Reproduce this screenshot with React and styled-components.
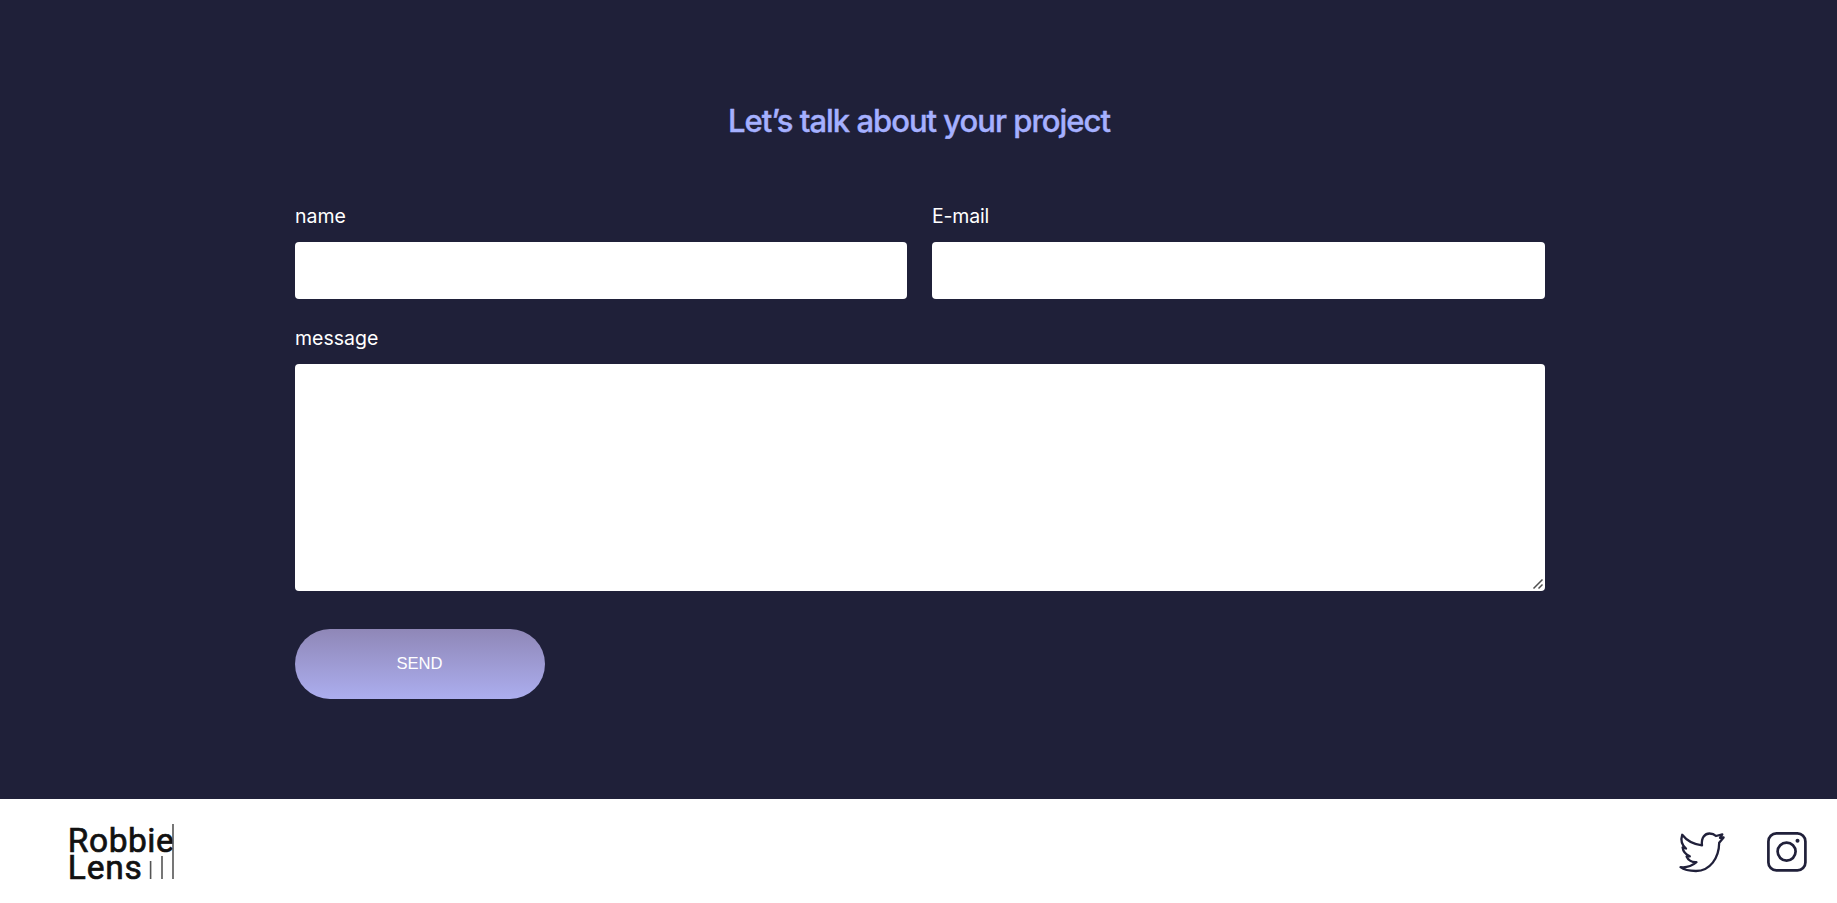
import React from "react";
import styled, { createGlobalStyle } from "styled-components";

const Global = createGlobalStyle`
  *, *::before, *::after { box-sizing: border-box; }
  body { margin: 0; background: #fff; font-family: Inter, "Open Sans", sans-serif; }
`;

const Contact = styled.section`
  height: 799px;
  padding-top: 100px;
  background: #1f2039;
`;

const Form = styled.form`
  width: 1250px;
  margin: 0 0 0 295px;
  display: flex;
  flex-direction: column;
`;

const Title = styled.h2`
  margin: 0 0 56px;
  padding-right: 2px;
  height: 42px;
  line-height: 41px;
  font-size: 31px;
  font-weight: 500;
  letter-spacing: -1px;
  text-align: center;
  color: #a5b0ff;
  -webkit-text-stroke: 0.4px #a5b0ff;
`;

const FieldRow = styled.div`
  display: grid;
  grid-template-columns: 612px 1fr;
  gap: 25px;
  margin-bottom: 21px;
`;

const Field = styled.label`
  display: flex;
  flex-direction: column;
`;

const LabelText = styled.span`
  height: 36px;
  margin-bottom: 8px;
  line-height: 36px;
  font-size: 19.5px;
  font-weight: 400;
  letter-spacing: ${(p) => p.$tracking || 0}px;
  color: #fff;
`;

const Input = styled.input`
  height: 57px;
  padding: 0 16px;
  border: 0;
  border-radius: 4px;
  background: #fff;
  font: inherit;
`;

const TextAreaWrap = styled.div`
  position: relative;
  display: flex;
`;

const TextArea = styled.textarea`
  flex: 1;
  height: 227px;
  padding: 16px;
  border: 0;
  border-radius: 4px;
  background: #fff;
  font: inherit;
  resize: vertical;

  &::-webkit-resizer {
    background: transparent;
  }
`;

const Grip = styled.svg`
  position: absolute;
  right: 1px;
  bottom: 1px;
  pointer-events: none;
`;

const SendButton = styled.button`
  width: 250px;
  height: 70px;
  margin-top: 38px;
  padding: 0 1px 1px 0;
  border: 0;
  border-radius: 35px;
  background: linear-gradient(#8f87b7, #acaeef);
  font: 400 16.6px "Liberation Sans", Arial, sans-serif;
  color: #fff;
`;

const Footer = styled.footer`
  height: 104px;
  padding: 2px 30px 0 68px;
  display: flex;
  align-items: center;
  justify-content: space-between;
  background: #fff;
`;

const Socials = styled.div`
  display: flex;
  align-items: center;
  gap: 37px;
`;

const Icon = styled.svg`
  display: block;
  fill: none;
  stroke: #20203a;
`;

const Logo = () => (
  <svg width="110" height="72" viewBox="0 0 110 72" role="img" aria-label="Robbie Lens">
    <g fill="#111" stroke="#111" strokeWidth="0.7" fontFamily="Roboto, sans-serif" fontWeight="400" fontSize="33.5">
      <text x="-0.2" y="35.5" textLength="106" lengthAdjust="spacing">Robbie</text>
      <text x="-0.2" y="62.5" textLength="74" lengthAdjust="spacing">Lens</text>
    </g>
    <path d="M82.6 45v18M94 40v23M105 8v55" stroke="#555" strokeWidth="1.6" />
  </svg>
);

const Twitter = () => (
  <Icon width="56" height="52" viewBox="0 0 56 52" strokeWidth="2.3" strokeLinejoin="round">
    <path d="M8.2 8.8C13 15 20 18.5 28 19.3C27 11.5 31 7.5 35.5 7.5C38.5 7.5 40.5 8.5 42 10L48.3 8.3L46 11.8L49.6 11.5L45.2 16.8C45 32 36 45 22 45C15 45 10 44 6.5 41.2C13 42 18 40 22.5 36.2C18 36.5 14 34 12.6 30.5L15.8 30.3C11 28 9 25 8.6 21.3L12 22.5C8 19 6.5 14 8.2 8.8Z" />
  </Icon>
);

const Instagram = () => (
  <Icon width="40" height="40" viewBox="0 0 40 40" strokeWidth="2.7">
    <rect x="1.4" y="1.4" width="37" height="37" rx="8" />
    <circle cx="19.6" cy="19.6" r="9" />
    <circle cx="30.5" cy="8.8" r="2" fill="#20203a" stroke="none" />
  </Icon>
);

export default function App() {
  return (
    <>
      <Global />
      <Contact>
        <Form>
          <Title>Let’s talk about your project</Title>
          <FieldRow>
            <Field><LabelText>name</LabelText><Input /></Field>
            <Field><LabelText $tracking={-0.2}>E-mail</LabelText><Input /></Field>
          </FieldRow>
          <Field>
            <LabelText>message</LabelText>
            <TextAreaWrap>
              <TextArea />
              <Grip width="12" height="12" viewBox="0 0 12 12" fill="none" stroke="#505050" strokeWidth="1.5">
                <path d="M1.5 10.5L10.5 1.5M6.5 10.5L10.5 6.5" />
              </Grip>
            </TextAreaWrap>
          </Field>
          <SendButton type="button">SEND</SendButton>
        </Form>
      </Contact>
      <Footer>
        <Logo />
        <Socials><Twitter /><Instagram /></Socials>
      </Footer>
    </>
  );
}
